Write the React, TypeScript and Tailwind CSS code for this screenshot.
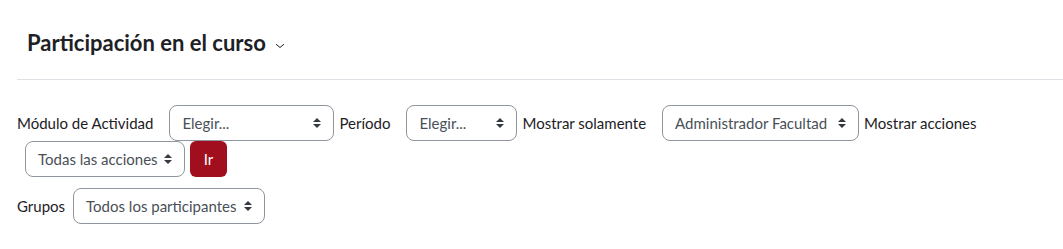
import React from "react";

function Arrow() {
  return (
    <svg width="8" height="10" viewBox="0 0 4 5" className="shrink-0">
      <path fill="#343a40" d="M2 0L0 2h4zm0 5L0 3h4z" />
    </svg>
  );
}

function Sel({ text, w, cls = "" }: { text: string; w: string; cls?: string }) {
  return (
    <div
      className={`flex h-9 items-center justify-between rounded-lg border border-[#8f959e] bg-white pl-3 pr-3 text-[15px] text-[#495057] ${w} ${cls}`}
    >
      <span className="whitespace-nowrap">{text}</span>
      <Arrow />
    </div>
  );
}

function Label({ text, cls = "" }: { text: string; cls?: string }) {
  return <span className={`whitespace-nowrap text-[15px] text-[#1d2125] ${cls}`}>{text}</span>;
}

export default function App() {
  return (
    <div className="min-h-[249px] bg-white pl-[17px]" style={{ fontFamily: "Lato, 'Noto Sans', sans-serif" }}>
      <div className="flex items-center pl-[10px] pt-[29px]">
        <h2 className="text-[22px] font-bold leading-[27px] text-[#1d2125]">Participación en el curso</h2>
        <svg width="10" height="6" viewBox="0 0 10 6" className="ml-[9px] mt-[6px]">
          <path d="M1 1.2 L5 4.5 L9 1.2" fill="none" stroke="#1d2125" strokeWidth="1" />
        </svg>
      </div>
      <div className="mt-[23px] h-px bg-[#dee2e6]" />
      <div className="mt-[25px] flex flex-wrap items-center">
        <Label text="Módulo de Actividad" cls="mr-2" />
        <Sel text="Elegir..." w="w-[165px]" cls="ml-2 mr-[5px]" />
        <Label text="Período" cls="mr-2" />
        <Sel text="Elegir..." w="w-[111px]" cls="ml-2 mr-[5px]" />
        <Label text="Mostrar solamente" cls="mr-2" />
        <Sel text="Administrador Facultad" w="w-[197px]" cls="ml-2 mr-[5px]" />
        <Label text="Mostrar acciones" cls="mr-2" />
        <Sel text="Todas las acciones" w="w-[160px]" cls="ml-2 mr-[5px]" />
        <button className="h-9 w-[37px] rounded-md bg-[#a10f1f] text-[15px] text-white">Ir</button>
      </div>
      <div className="mt-[11px] flex items-center">
        <Label text="Grupos" cls="mr-2" />
        <Sel text="Todos los participantes" w="w-[192px]" />
      </div>
    </div>
  );
}
